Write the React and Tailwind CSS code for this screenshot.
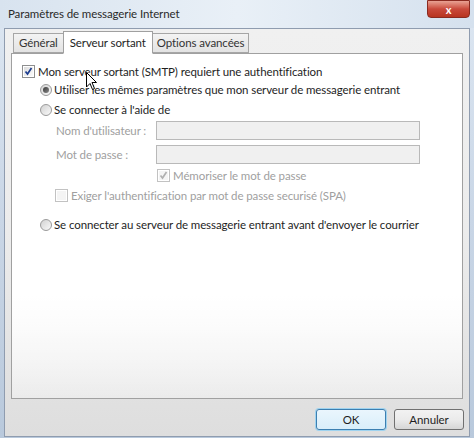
import React from "react";

const font = { fontFamily: 'Lato, "Liberation Sans", sans-serif' };

function Check({ checked, disabled }) {
  return (
    <span className={`relative inline-flex w-[13px] h-[13px] shrink-0 border ${disabled ? "border-[#c2c2c2]" : "border-[#8e8f8f]"} bg-white`}>
      <span className={`absolute inset-[1px] ${disabled ? "bg-[#f4f4f4]" : "bg-gradient-to-br from-[#dcdcdc] to-[#fbfbfb]"}`} />
      {checked && (
        <svg className="absolute inset-0" width="11" height="11" viewBox="0 0 11 11">
          <path d="M2.5 5.5 L4.5 8 L8.5 2" fill="none" stroke={disabled ? "#b0b0b0" : "#1d3d8f"} strokeWidth="1.7" />
        </svg>
      )}
    </span>
  );
}

function Radio({ checked }) {
  return (
    <span className="relative inline-flex w-[12px] h-[12px] shrink-0 rounded-full border border-[#9a9a9a] bg-gradient-to-br from-[#d2d2d2] to-[#fafafa]">
      {checked && <span className="absolute left-[2px] top-[2px] w-[6px] h-[6px] rounded-full bg-gradient-to-br from-[#3a3a3a] to-[#8a8a8a]" />}
    </span>
  );
}

export default function App() {
  return (
    <div className="relative w-[474px] h-[438px] overflow-hidden bg-gradient-to-b from-[#dde7f2] via-[#c9d6e6] to-[#b9c9dc] text-[11.5px] tracking-[-0.1px] text-[#1e1e1e] whitespace-nowrap" style={font}>
      {/* title bar */}
      <div className="h-[28px] flex items-start justify-between pl-[8px] pr-[4px] bg-gradient-to-r from-[#d8e3ef] via-[#e9f0f7] to-[#d5e1ee]">
        <span className="mt-[5px] text-[#2a2a2a]">Paramètres de messagerie Internet</span>
        <div className="w-[43px] h-[18px] rounded-b-[4px] bg-gradient-to-b from-[#e8a193] via-[#c9493b] to-[#b8341f] border border-[#8a2a20] flex items-center justify-center text-white text-[11px] font-bold leading-none">x</div>
      </div>
      {/* body */}
      <div className="mx-[4px] h-[409px] border border-[#8f9caf] bg-gradient-to-b from-[#f0f0f0] via-[#ececec] to-[#dedede] flex flex-col px-[6px]">
        {/* tabs */}
        <div className="flex items-end mt-[2px] h-[23px] relative z-10 -mb-px">
          <div className="h-[20px] px-[5px] flex items-center border border-[#a6a6a6] border-r-0 bg-gradient-to-b from-[#f3f3f3] to-[#e3e3e3] text-[#333] mb-px ml-[2px]">Général</div>
          <div className="h-[23px] px-[6px] flex items-center border border-[#a0a0a0] border-b-white bg-white">Serveur sortant</div>
          <div className="h-[20px] px-[4px] flex items-center border border-[#a6a6a6] border-l-0 bg-gradient-to-b from-[#f3f3f3] to-[#e3e3e3] text-[#333] mb-px">Options avancées</div>
        </div>
        {/* panel */}
        <div className="h-[346px] border border-[#a0a0a0] bg-gradient-to-b from-white via-white to-[#ebebeb] relative">
          <div className="absolute inset-0 bg-gradient-to-b from-white from-[70%] to-transparent" />
          <div className="relative flex flex-col pl-[10px] pt-[10px]">
            <div className="flex items-center gap-[3px] h-[15px]">
              <Check checked />
              <span>Mon serveur sortant (SMTP) requiert une authentification</span>
            </div>
            <div className="flex items-center gap-[2px] h-[15px] ml-[18px] mt-[3px]">
              <Radio checked />
              <span>Utiliser les mêmes paramètres que mon serveur de messagerie entrant</span>
            </div>
            <div className="flex items-center gap-[2px] h-[15px] ml-[18px] mt-[5px]">
              <Radio />
              <span>Se connecter à l'aide de</span>
            </div>
            <div className="flex items-center ml-[34px] mt-[4px] h-[19px]">
              <span className="w-[100px] text-[#a0a0a0]">Nom d'utilisateur :</span>
              <div className="w-[264px] h-[19px] border border-[#b9b9b9] bg-[#f0f0f0]" />
            </div>
            <div className="flex items-center ml-[34px] mt-[5px] h-[19px]">
              <span className="w-[100px] text-[#a0a0a0]">Mot de passe :</span>
              <div className="w-[264px] h-[19px] border border-[#b9b9b9] bg-[#f0f0f0]" />
            </div>
            <div className="flex items-center gap-[3px] h-[15px] ml-[135px] mt-[4px]">
              <Check checked disabled />
              <span className="text-[#a0a0a0]">Mémoriser le mot de passe</span>
            </div>
            <div className="flex items-center gap-[3px] h-[15px] ml-[33px] mt-[5px]">
              <Check disabled />
              <span className="text-[#a0a0a0]">Exiger l'authentification par mot de passe securisé (SPA)</span>
            </div>
            <div className="flex items-center gap-[2px] h-[15px] ml-[18px] mt-[14px]">
              <Radio />
              <span>Se connecter au serveur de messagerie entrant avant d'envoyer le courrier</span>
            </div>
          </div>
        </div>
        {/* buttons */}
        <div className="flex justify-end gap-[8px] mt-[10px] -mr-px">
          <button className="w-[70px] h-[21px] rounded-[3px] border border-[#3c7fb1] shadow-[0_0_0_1px_#9fd3ef] bg-gradient-to-b from-[#eaf6fd] to-[#d9eefa]">OK</button>
          <button className="w-[70px] h-[21px] rounded-[3px] border border-[#707070] bg-gradient-to-b from-[#f2f2f2] via-[#ebebeb] to-[#d6d6d6]">Annuler</button>
        </div>
      </div>
      {/* mouse cursor */}
      <svg className="absolute left-[86px] top-[72px]" width="12" height="19" viewBox="0 0 12 19">
        <path d="M0.5 0.5 L0.5 15 L4 11.5 L6.5 17.5 L8.5 16.5 L6 10.5 L10.5 10.5 Z" fill="white" stroke="black" strokeWidth="1" />
      </svg>
    </div>
  );
}
